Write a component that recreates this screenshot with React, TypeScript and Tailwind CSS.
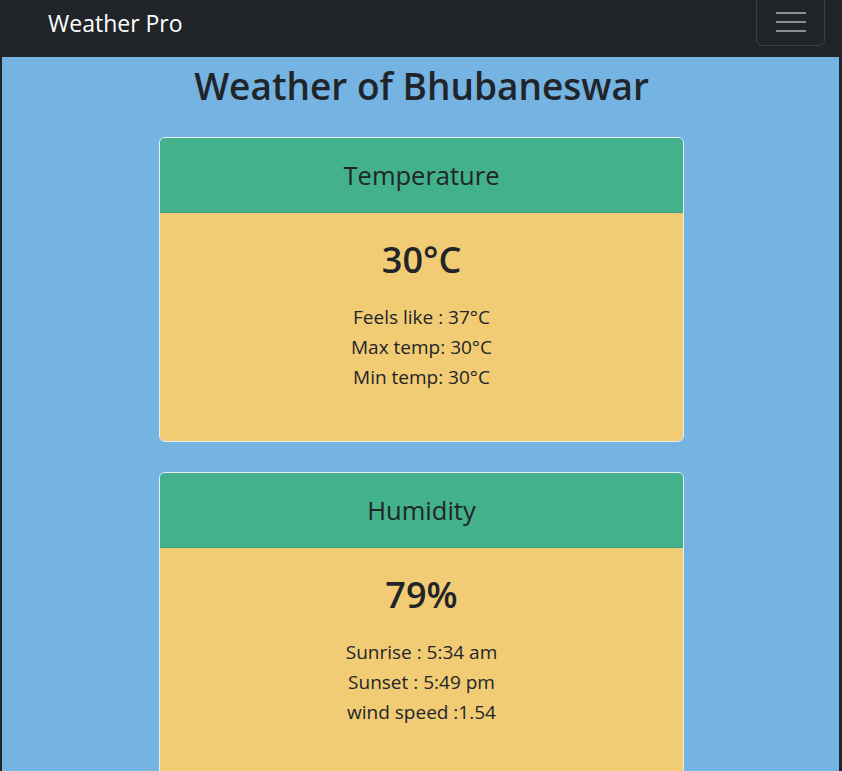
import React from "react";

const font = { fontFamily: '"Open Sans", "Noto Sans", sans-serif' };

function Card({ title, value, lines }: { title: string; value: string; lines: string[] }) {
  return (
    <div className="w-[525px] rounded-[6px] border border-[#e9eef2] overflow-hidden">
      <div className="h-[75px] bg-[#43b18b] border-b border-[#3c9f7d] flex items-center justify-center">
        <span className="text-[25.5px] text-[#212529]">{title}</span>
      </div>
      <div className="bg-[#f2cc74] h-[228px] flex flex-col items-center pt-[22px]">
        <div className="text-[36px] font-semibold text-[#212529] leading-[50px]">{value}</div>
        <div className="mt-[17px] flex flex-col items-center text-[19px] leading-[30px] text-[#212529]">
          {lines.map((l) => (
            <div key={l}>{l}</div>
          ))}
        </div>
      </div>
    </div>
  );
}

export default function App() {
  return (
    <div className="w-[842px] h-[771px] overflow-hidden bg-[#212529]" style={font}>
      <nav className="h-[57px] bg-[#212529] flex items-start justify-between pl-[48px] pr-[17px]">
        <span className="text-[23px] text-white leading-[30px] mt-[8px]">Weather Pro</span>
        <button className="w-[69px] h-[52px] -mt-[6px] rounded-[6px] border border-[#3a3f44] flex flex-col items-center justify-center gap-[7px] pt-[4px]">
          <span className="block w-[30px] h-[2px] bg-[#8c8f92]" />
          <span className="block w-[30px] h-[2px] bg-[#8c8f92]" />
          <span className="block w-[30px] h-[2px] bg-[#8c8f92]" />
        </button>
      </nav>
      <main className="ml-[2px] mr-[3px] h-[714px] bg-[#75b3e2] flex flex-col items-center pl-[2px]">
        <h1 className="text-[37px] font-semibold text-[#212529] leading-[54px] mt-[2px]">Weather of Bhubaneswar</h1>
        <div className="mt-[24px] flex flex-col gap-[30px]">
          <Card title="Temperature" value="30°C" lines={["Feels like : 37°C", "Max temp: 30°C", "Min temp: 30°C"]} />
          <Card title="Humidity" value="79%" lines={["Sunrise : 5:34 am", "Sunset : 5:49 pm", "wind speed :1.54"]} />
        </div>
      </main>
    </div>
  );
}
